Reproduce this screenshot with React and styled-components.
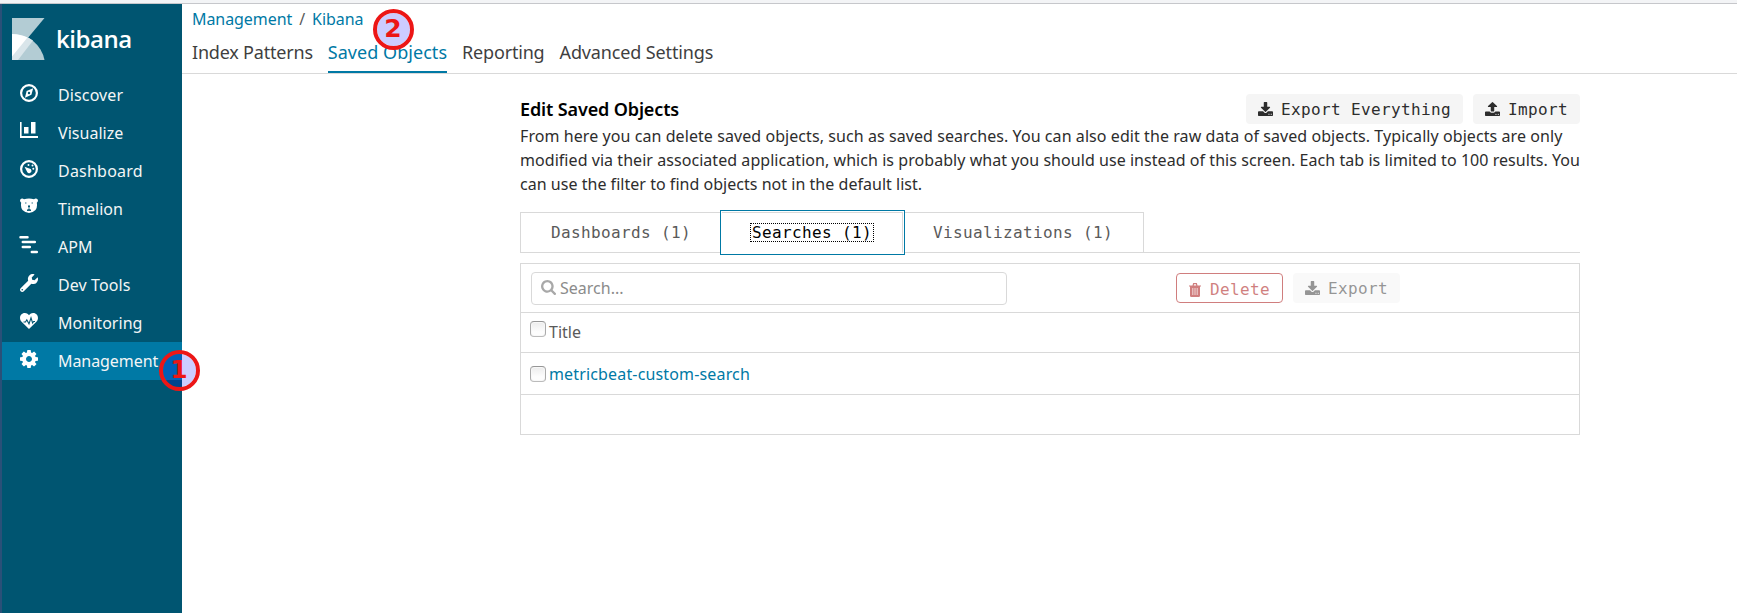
import React from 'react';
import styled, { createGlobalStyle, css } from 'styled-components';
import { FaWrench } from 'react-icons/fa';

const GlobalStyle = createGlobalStyle`
  * { box-sizing: border-box; }
  body {
    margin: 0;
    background: #fff;
    color: #2d2d2d;
    font: 16px/24px "Noto Sans", "Open Sans", sans-serif;
    overflow: hidden;
  }
`;

const line = '#d9d9d9';
const blue = '#0079a5';

const Page = styled.div`
  position: relative;
  height: 613px;
  display: flex;
  flex-direction: column;
`;
const BrowserEdge = styled.div`
  height: 4px;
  flex: none;
  background: #f3f4f6;
  border-bottom: 1px solid #c6c7cb;
`;
const Shell = styled.div`
  flex: 1;
  display: flex;
  border-left: 2px solid #2a5078;
`;
const Sidebar = styled.nav`
  width: 180px;
  flex: none;
  background: #005571;
  color: #fff;
`;
const Brand = styled.div`
  display: flex;
  height: 72px;
  padding: 14px 0 0 10px;
`;
const BrandName = styled.span`
  margin: 5px 0 0 11px;
  font: 600 24px/32px "Open Sans", "Noto Sans", sans-serif;
  letter-spacing: -0.45px;
`;
const NavItem = styled.a`
  display: flex;
  height: 38px;
  padding-left: 18px;
  color: #f3f5f6;
  background: ${(p) => (p.$active ? blue : 'transparent')};
  letter-spacing: ${(p) => p.$spacing || 0}px;
  svg { width: 18px; height: 18px; margin-top: 8px; flex: none; color: #fff; }
  span { margin: 7px 0 0 20px; white-space: nowrap; }
`;
const Main = styled.main`
  flex: 1;
  min-width: 0;
`;
const Header = styled.header`
  height: 70px;
  padding: 3px 0 0 10px;
  border-bottom: 1px solid ${line};
`;
const Crumbs = styled.div`
  display: flex;
  gap: 7px;
  color: #5a5a5a;
  letter-spacing: -0.07px;
  a { color: ${blue}; }
`;
const TopTabs = styled.div`
  display: flex;
  gap: 15px;
  margin-top: 6px;
`;
const TopTab = styled.a`
  height: 36px;
  font-size: 18px;
  line-height: 30px;
  letter-spacing: ${(p) => p.$spacing || 0}px;
  white-space: nowrap;
  color: ${(p) => (p.$active ? blue : '#3f3f3f')};
  border-bottom: 2px solid ${(p) => (p.$active ? blue : 'transparent')};
`;
const Content = styled.section`
  width: 1060px;
  margin: 20px 0 0 338px;
`;
const TitleRow = styled.div`
  display: flex;
  align-items: flex-start;
  gap: 10px;
  height: 30px;
`;
const Title = styled.h1`
  flex: 1;
  margin: 0;
  font-size: 18px;
  line-height: 30px;
  font-weight: 600;
  letter-spacing: -0.13px;
  color: #000;
`;
const mono = css`
  font-family: "DejaVu Sans Mono", monospace;
  font-size: 16px;
  letter-spacing: 0.367px;
  white-space: pre;
`;
const Button = styled.button`
  ${mono}
  display: flex;
  height: 30px;
  padding: 0 12px;
  border: 0;
  border-radius: 4px;
  color: #2d2d2d;
  background: #f5f5f5;
  line-height: 31px;
  opacity: ${(p) => (p.$disabled ? 0.5 : 1)};
  svg { width: 15px; height: 14px; margin: 8px 8px 0 0; flex: none; }
  ${(p) => p.$danger && css`
    border: 1px solid #a30000;
    background: #fff;
    color: #a30000;
    svg { width: 12px; height: 14px; margin: 9px 9px 0 0; }
  `}
`;
const Description = styled.p`
  margin: 0;
`;
const DescriptionLine = styled.span`
  display: block;
  white-space: nowrap;
  letter-spacing: ${(p) => p.$spacing}px;
`;
const Tabs = styled.div`
  display: flex;
  height: 41px;
  margin-top: 16px;
  border-bottom: 1px solid ${line};
`;
const Tab = styled.button`
  ${mono}
  height: 41px;
  padding: 0 30px;
  border: 1px solid ${line};
  border-left-width: ${(p) => (p.$first ? '1px' : '0')};
  background: #fff;
  color: #5a5a5a;
  line-height: 39px;
  ${(p) => p.$active && css`
    position: relative;
    color: #000;
    border-bottom-color: transparent;
    box-shadow: 0 0 0 1px #fff, 0 0 0 2px ${blue};
    span { display: block; height: 19px; margin: 0 -2px; padding: 0 1px; line-height: 18px; border: 1px dotted #000; }
  `}
`;
const Panel = styled.div`
  margin-top: 10px;
  border: 1px solid ${line};
`;
const Toolbar = styled.div`
  display: flex;
  gap: 10px;
  height: 48px;
  padding: 9px 0 0 10px;
`;
const SearchBox = styled.div`
  display: flex;
  width: 476px;
  height: 33px;
  margin: -1px 159px 0 0;
  padding-left: 9px;
  border: 1px solid ${line};
  border-radius: 4px;
  color: #8b8b8b;
  line-height: 31px;
  svg { width: 15px; height: 15px; margin: 7px 4px 0 0; color: #a8a8a8; }
`;
const Row = styled.div`
  display: flex;
  height: ${(p) => p.$height}px;
  padding-left: 9px;
  border-top: 1px solid ${line};
  color: ${(p) => (p.$link ? blue : '#5a5a5a')};
  letter-spacing: ${(p) => (p.$link ? '0.155px' : '0')};
  line-height: ${(p) => (p.$link ? 42 : 39)}px;
`;
const Checkbox = styled.span`
  width: 16px;
  height: 16px;
  margin: ${(p) => p.$top}px 3px 0 0;
  border: 1px solid #aaa;
  border-top-color: #969696;
  border-bottom-color: #bbb;
  border-radius: 4px;
  background: linear-gradient(#ececec, #fdfdfd 70%);
  box-shadow: inset 0 0 0 1px #f8f8f8;
`;
const Marker = styled.div`
  position: absolute;
  left: ${(p) => p.$x}px;
  top: ${(p) => p.$y}px;
  width: 41px;
  height: 41px;
  border: 4px solid #ec1616;
  border-radius: 50%;
  background: rgba(0, 0, 255, 0.2);
  background-clip: padding-box;
  color: #ec1616;
  text-align: center;
  font: bold 25px/32px "DejaVu Sans", sans-serif;
`;

const Logo = () => (
  <svg width="33" height="42" viewBox="0 0 33 42">
    <path d="M0 0h32.5L0 39z" fill="#b3ccd4" />
    <path d="M0 16a32 32 0 0 1 32.5 26H0z" fill="#b3ccd4" />
    <path d="M0 16q11 0 21 6.500L6 42H0z" fill="#d9e5ea" />
    <path d="M0 16q8.500 0 15.500 3.500L0 38.500z" fill="#fff" />
  </svg>
);
const Compass = () => (
  <svg viewBox="0 0 18 18" fill="none" stroke="currentColor">
    <circle cx="9" cy="9" r="7.900" strokeWidth="2.200" />
    <path d="M13.200 4.200 6.600 7.100 5 13.800l6.400-3z" fill="currentColor" stroke="none" />
    <circle cx="9" cy="9" r="1.200" fill="#005571" stroke="none" />
  </svg>
);
const Bars = () => (
  <svg viewBox="0 0 18 18" fill="currentColor">
    <path d="M0 0h1.600v14H18v2H0zM4 5h4.500v6.500H4zM11 0h4.500v11.500H11z" />
  </svg>
);
const Gauge = () => (
  <svg viewBox="0 0 18 18" fill="currentColor">
    <circle cx="9" cy="9" r="7.900" fill="none" stroke="currentColor" strokeWidth="2.200" />
    <path d="M4.500 6.700 9.200 8.500a2.300 2.300 0 1 1-2 3.400z" />
    <circle cx="8.500" cy="5" r="1" /><circle cx="12.500" cy="5.500" r="1" /><circle cx="13.300" cy="8.800" r="1" />
  </svg>
);
const Bear = () => (
  <svg viewBox="0 0 18 18">
    <path d="M.3 1.500Q2-.2 4 1.300q5-1.500 10 0 2-1.500 3.700.2.800 2-.9 3.200.8 4.800-1.300 7.300Q12.500 15 9 15t-6.500-3Q.4 9.500 1.200 4.700-.5 3.500.3 1.500z" fill="#fff" />
    <path d="M5.200 5h1.200M11.600 5h1.200M8 8h2l-1 .8zM9 9v1.800M7 12.300q2-1.400 4 0z" fill="#005571" stroke="#005571" />
  </svg>
);
const Traces = () => (
  <svg viewBox="0 0 18 18" fill="none" stroke="currentColor" strokeWidth="2.500" strokeLinecap="round" overflow="visible">
    <path d="M.5 1.300h7M2.800 6h12M2.800 11h7M11.800 16h5" />
  </svg>
);
const Heart = () => (
  <svg viewBox="0 0 18 18">
    <path d="M9 17 1.600 9.800C-1.500 6.500.2 1 4.800 1 7 1 8.300 2.300 9 3.300 9.700 2.300 11 1 13.200 1c4.600 0 6.300 5.500 3.200 8.800z" fill="#fff" />
    <path d="M3.500 10h2l1.300-2.200 2.200 4 2-6 1.600 5.200 1-1.500h1.400" fill="none" stroke="#005571" strokeWidth="1.100" />
  </svg>
);
const Cog = () => (
  <svg viewBox="0 0 1536 1536" fill="currentColor">
    <path d="M1024 768q0-106-75-181t-181-75-181 75-75 181 75 181 181 75 181-75 75-181zm512-109v222q0 12-8 23t-20 13l-185 28q-19 54-39 91 35 50 107 138 10 12 10 25t-9 23q-27 37-99 108t-94 71q-12 0-26-9l-138-108q-44 23-91 38-16 136-29 186-7 28-36 28h-222q-14 0-24.500-8.500t-11.500-21.500l-28-184q-49-16-90-37l-141 107q-10 9-25 9-14 0-25-11-126-114-165-168-7-10-7-23 0-12 8-23 15-21 51-66.500t54-70.500q-27-50-41-99l-183-27q-13-2-21-12.500t-8-23.500v-222q0-12 8-23t19-13l186-28q14-46 39-92-40-57-107-138-10-12-10-24 0-10 9-23 26-36 98.500-107.500t94.500-71.500q13 0 26 10l138 107q44-23 91-38 16-136 29-186 7-28 36-28h222q14 0 24.500 8.500t11.500 21.500l28 184q49 16 90 37l142-107q9-9 24-9 13 0 25 10 129 119 165 170 7 8 7 22 0 12-8 23-15 21-51 66.500t-54 70.500q26 50 41 98l183 28q13 2 21 12.500t8 23.500z" />
  </svg>
);
const dots = (y) => `M1280 ${y}q0-26-19-45t-45-19-45 19-19 45 19 45 45 19 45-19 19-45zm256 0q0-26-19-45t-45-19-45 19-19 45 19 45 45 19 45-19 19-45z`;
const Download = () => (
  <svg viewBox="0 0 1664 1536" fill="currentColor" preserveAspectRatio="none">
    <path d={dots(1344) + 'm128-224v320q0 40-28 68t-68 28h-1472q-40 0-68-28t-28-68v-320q0-40 28-68t68-28h465l135 136q58 56 136 56t136-56l136-136h464q40 0 68 28t28 68zm-325-569q17 41-14 70l-448 448q-18 19-45 19t-45-19l-448-448q-31-29-14-70 17-39 59-39h256v-448q0-26 19-45t45-19h256q26 0 45 19t19 45v448h256q42 0 59 39z'} />
  </svg>
);
const Upload = () => (
  <svg viewBox="0 0 1664 1600" fill="currentColor" preserveAspectRatio="none">
    <path d={dots(1408) + 'm128-224v320q0 40-28 68t-68 28h-1472q-40 0-68-28t-28-68v-320q0-40 28-68t68-28h427q21 56 70.500 92t110.500 36h256q61 0 110.500-36t70.500-92h427q40 0 68 28t28 68zm-325-648q-17 40-59 40h-256v448q0 26-19 45t-45 19h-256q-26 0-45-19t-19-45v-448h-256q-42 0-59-40-17-39 14-69l448-448q18-19 45-19t45 19l448 448q31 30 14 69z'} />
  </svg>
);
const Trash = () => (
  <svg viewBox="0 0 12 14" fill="none" stroke="currentColor">
    <path d="M0 3h12M4 3l.6-2.300h2.800L8 3" strokeWidth="1.200" />
    <path d="M1 3h10v9.500q0 1.500-1.300 1.500H2.300Q1 14 1 12.500z" fill="currentColor" stroke="none" />
    <path d="M3.800 5v7M6 5v7M8.200 5v7" stroke="#fff" strokeWidth=".7" />
  </svg>
);
const Search = () => (
  <svg viewBox="0 0 1664 1664" fill="currentColor">
    <path d="M1152 704q0-185-131.500-316.500t-316.500-131.500-316.500 131.500-131.500 316.500 131.500 316.500 316.500 131.500 316.500-131.500 131.500-316.500zm512 832q0 52-38 90t-90 38q-54 0-90-38l-343-342q-179 124-399 124-143 0-273.500-55.500t-225-150-150-225-55.500-273.500 55.500-273.500 150-225 225-150 273.500-55.500 273.500 55.500 225 150 150 225 55.500 273.500q0 220-124 399l343 343q37 37 37 90z" />
  </svg>
);

const navItems = [
  ['Discover', Compass, 0.12],
  ['Visualize', Bars, 0.03],
  ['Dashboard', Gauge, 0.22],
  ['Timelion', Bear, 0],
  ['APM', Traces, 0],
  ['Dev Tools', FaWrench, 0.1],
  ['Monitoring', Heart, 0.03],
  ['Management', Cog, -0.07],
];

export default function App() {
  return (
    <Page>
      <GlobalStyle />
      <BrowserEdge />
      <Shell>
        <Sidebar>
          <Brand><Logo /><BrandName>kibana</BrandName></Brand>
          {navItems.map(([label, Icon, spacing]) => (
            <NavItem key={label} $active={label === 'Management'} $spacing={spacing}><Icon /><span>{label}</span></NavItem>
          ))}
        </Sidebar>
        <Main>
          <Header>
            <Crumbs><a>Management</a><span>/</span><a>Kibana</a></Crumbs>
            <TopTabs>
              <TopTab $spacing={-0.2}>Index Patterns</TopTab>
              <TopTab $active $spacing={0.04}>Saved Objects</TopTab>
              <TopTab $spacing={-0.18}>Reporting</TopTab>
              <TopTab $spacing={-0.13}>Advanced Settings</TopTab>
            </TopTabs>
          </Header>
          <Content>
            <TitleRow>
              <Title>Edit Saved Objects</Title>
              <Button><Download />Export Everything</Button>
              <Button><Upload />Import</Button>
            </TitleRow>
            <Description>
              <DescriptionLine $spacing={0.073}>From here you can delete saved objects, such as saved searches. You can also edit the raw data of saved objects. Typically objects are only </DescriptionLine>
              <DescriptionLine $spacing={0.052}>modified via their associated application, which is probably what you should use instead of this screen. Each tab is limited to 100 results. You </DescriptionLine>
              <DescriptionLine $spacing={0.028}>can use the filter to find objects not in the default list.</DescriptionLine>
            </Description>
            <Tabs>
              <Tab $first>Dashboards (1)</Tab>
              <Tab $active><span>Searches (1)</span></Tab>
              <Tab>Visualizations (1)</Tab>
            </Tabs>
            <Panel>
              <Toolbar>
                <SearchBox><Search />Search...</SearchBox>
                <Button $danger $disabled><Trash />Delete</Button>
                <Button $disabled><Download />Export</Button>
              </Toolbar>
              <Row $height={40}><Checkbox $top={8} />Title</Row>
              <Row $height={42} $link><Checkbox $top={13} />metricbeat-custom-search</Row>
              <Row $height={40} />
            </Panel>
          </Content>
        </Main>
      </Shell>
      <Marker $x={158.5} $y={349.5}>1</Marker>
      <Marker $x={372.5} $y={8.5}>2</Marker>
    </Page>
  );
}
